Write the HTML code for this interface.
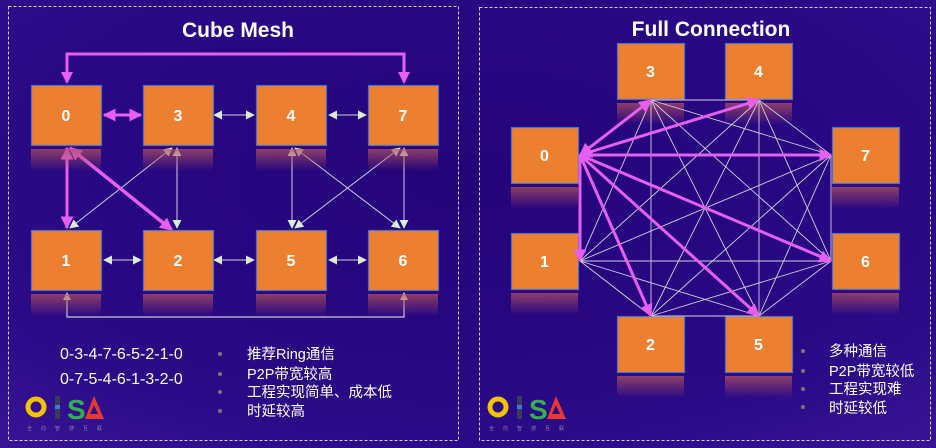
<!DOCTYPE html>
<html><head><meta charset="utf-8"><style>
html,body{margin:0;padding:0;width:936px;height:448px;overflow:hidden;background:#22087a}
svg{display:block}
text{font-family:"Liberation Sans","Noto Sans CJK SC",sans-serif;fill:#fff}
</style></head><body>
<svg id="s" width="936" height="448" viewBox="0 0 936 448" xmlns="http://www.w3.org/2000/svg">
<defs>
<radialGradient id="bg" cx="0.5" cy="0.4" r="0.8">
<stop offset="0" stop-color="#24037a"/><stop offset="0.7" stop-color="#2a0a86"/><stop offset="1" stop-color="#3a1596"/>
</radialGradient>
<linearGradient id="refl" x1="0" y1="0" x2="0" y2="1">
<stop offset="0" stop-color="#b05060" stop-opacity="0.75"/><stop offset="1" stop-color="#b05060" stop-opacity="0"/>
</linearGradient>
<marker id="wa" viewBox="0 0 10 10" refX="9" refY="5" markerWidth="9" markerHeight="9" markerUnits="userSpaceOnUse" orient="auto-start-reverse"><path d="M0,0L10,5L0,10z" fill="#d8ecd8"/></marker>
<marker id="ma" viewBox="0 0 10 10" refX="9" refY="5" markerWidth="13" markerHeight="13" markerUnits="userSpaceOnUse" orient="auto-start-reverse"><path d="M0,0L10,5L0,10z" fill="#e65ff0"/></marker>
</defs>
<rect width="936" height="448" fill="url(#bg)"/>
<rect x="8.5" y="6.5" width="450" height="434" fill="none" stroke="#d8d0f0" stroke-dasharray="3,2"/>
<rect x="479.5" y="7.5" width="451" height="433" fill="none" stroke="#d8d0f0" stroke-dasharray="3,2"/>
<text x="238" y="37" font-size="21" font-weight="bold" text-anchor="middle">Cube Mesh</text>
<text x="711" y="36" font-size="21" font-weight="bold" text-anchor="middle">Full Connection</text>
<g id="left"></g>
<g id="right"></g>
<g font-size="16">
<text x="60" y="359">0-3-4-7-6-5-2-1-0</text>
<text x="60" y="384">0-7-5-4-6-1-3-2-0</text>
</g>
<g fill="#777">
<circle cx="220" cy="354" r="2"/><circle cx="220" cy="374" r="2"/><circle cx="220" cy="392" r="2"/><circle cx="220" cy="411" r="2"/>
<circle cx="803" cy="351" r="2"/><circle cx="803" cy="371" r="2"/><circle cx="803" cy="389" r="2"/><circle cx="803" cy="407" r="2"/>
</g>
<g font-size="14.5">
<text x="247" y="359">推荐Ring通信</text>
<text x="247" y="379">P2P带宽较高</text>
<text x="247" y="397">工程实现简单、成本低</text>
<text x="247" y="416">时延较高</text>
<text x="829" y="356">多种通信</text>
<text x="829" y="376">P2P带宽较低</text>
<text x="829" y="394">工程实现难</text>
<text x="829" y="413">时延较低</text>
</g>
<g transform="translate(26,397)">
<circle cx="10" cy="10" r="8" fill="none" stroke="#f3c200" stroke-width="5"/>
<rect x="29" y="-1" width="5" height="23" fill="#3a3a5a"/><rect x="29" y="8" width="5" height="4" fill="#3a7ad0"/>
<text x="41" y="22" font-size="28" font-weight="bold" style="fill:#2fb34a">S</text>
<path d="M59,22L68,-1L78,22Z M64,17L68,8L72,17Z" fill="#e8392f" fill-rule="evenodd"/>
<text x="1" y="33" font-size="5" style="fill:#8888aa" letter-spacing="9">全向智感互联</text>
</g>
<g transform="translate(488,397)">
<circle cx="10" cy="10" r="8" fill="none" stroke="#f3c200" stroke-width="5"/>
<rect x="29" y="-1" width="5" height="23" fill="#3a3a5a"/><rect x="29" y="8" width="5" height="4" fill="#3a7ad0"/>
<text x="41" y="22" font-size="28" font-weight="bold" style="fill:#2fb34a">S</text>
<path d="M59,22L68,-1L78,22Z M64,17L68,8L72,17Z" fill="#e8392f" fill-rule="evenodd"/>
<text x="1" y="33" font-size="5" style="fill:#8888aa" letter-spacing="9">全向智感互联</text>
</g>
</svg>
<script>
var NS="http://www.w3.org/2000/svg";
function el(p,t,a){var e=document.createElementNS(NS,t);for(var k in a)e.setAttribute(k,a[k]);p.appendChild(e);return e;}
function box(g,x,y,w,h,l){
 el(g,"rect",{x:x,y:y+h+4,width:w,height:22,fill:"url(#refl)"});
 el(g,"rect",{x:x+0.5,y:y+0.5,width:w,height:h,fill:"#ed7f31",stroke:"#4a72c8","stroke-width":1.2});
 var t=el(g,"text",{x:x+w/2,y:y+h/2+6,"font-size":16,"font-weight":"bold","text-anchor":"middle"});t.textContent=l;
}
function ln(g,x1,y1,x2,y2,mag,ms,me,w){
 var a={x1:x1,y1:y1,x2:x2,y2:y2,stroke:mag?"#e65ff0":"#d0d0e0","stroke-width":w||(mag?3:1)};
 var m=mag?"url(#ma)":"url(#wa)";if(ms)a["marker-start"]=m;if(me)a["marker-end"]=m;el(g,"line",a);
}
var L=document.getElementById("left");
el(L,"polyline",{points:"67,82 67,54 404,54 404,82",fill:"none",stroke:"#e65ff0","stroke-width":3});
el(L,"path",{d:"M61,72L67,84L73,72Z M398,72L404,84L410,72Z",fill:"#e65ff0"});
el(L,"polyline",{points:"67,296 67,317 404,317 404,296",fill:"none",stroke:"#c8c8d8","stroke-width":1.2});
el(L,"path",{d:"M63,300L67,292L71,300Z M400,300L404,292L408,300Z",fill:"#d8ecd8"});
ln(L,172,148,70,228,0,1,1);ln(L,177,148,177,228,0,1,1);
ln(L,292,148,292,228,0,1,1);ln(L,295,148,400,228,0,1,1);
ln(L,400,148,295,228,0,1,1);ln(L,404,148,404,228,0,1,1);
ln(L,67,148,67,228,1,1,1);ln(L,70,148,172,230,1,1,1,3.5);
ln(L,104,115,141,115,1,1,1,3);
ln(L,214,115,254,115,0,1,1);ln(L,329,115,366,115,0,1,1);
ln(L,104,260,141,260,0,1,1);ln(L,214,260,254,260,0,1,1);ln(L,329,260,366,260,0,1,1);
var bx=[[31,85,"0"],[143,85,"3"],[256,85,"4"],[368,85,"7"],[31,230,"1"],[143,230,"2"],[256,230,"5"],[368,230,"6"]];
bx.forEach(function(b){box(L,b[0],b[1],70,60,b[2]);});
var R=document.getElementById("right");
var rb=[[511,127,"0"],[511,233,"1"],[617,316,"2"],[617,43,"3"],[725,43,"4"],[725,316,"5"],[832,233,"6"],[832,127,"7"]];
rb.forEach(function(b){box(R,b[0],b[1],67,56,b[2]);});
var P=[[580,155],[580,261],[651,316],[651,100],[759,100],[759,316],[831,261],[831,155]];
for(var i=0;i<8;i++)for(var j=i+1;j<8;j++)ln(R,P[i][0],P[i][1],P[j][0],P[j][1],0,0,0,0.9);
for(var j=1;j<8;j++){var both=(j==3||j==4);ln(R,P[0][0],P[0][1],P[j][0],P[j][1],1,both,1,3);}
</script>
</body></html>
